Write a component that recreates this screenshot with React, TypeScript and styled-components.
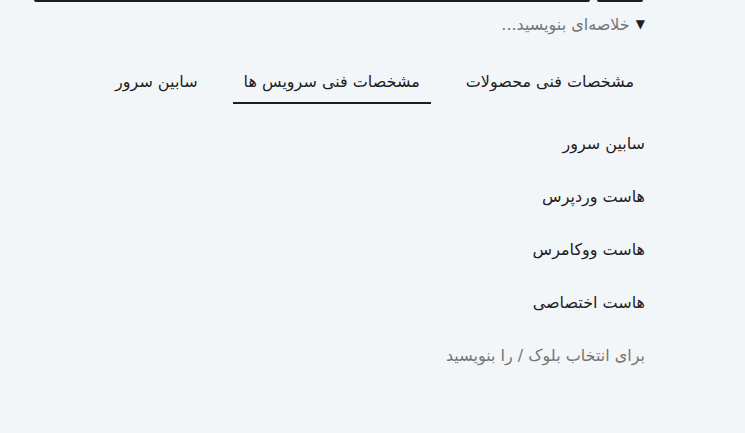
import React from "react";
import styled, { createGlobalStyle } from "styled-components";

const Global = createGlobalStyle`
  html, body { margin: 0; padding: 0; background: #f3f6f9; }
  body { font-family: "DejaVu Sans", sans-serif; color: #1e1e1e; }
`;

const Page = styled.div`
  direction: rtl;
  width: 611px;
  margin-left: 34px;
  box-sizing: border-box;
`;

const TopRow = styled.div`
  display: flex;
  gap: 7px;
  height: 2px;
  padding-right: 2px;
`;

const TopBox = styled.div<{ $w: number }>`
  width: ${(p) => p.$w}px;
  height: 2px;
  background: #1e1e1e;
  border-radius: 0 0 2px 2px;
`;

const Summary = styled.div`
  display: flex;
  align-items: center;
  gap: 6px;
  margin-top: 12px;
  height: 20px;
  font-size: 16px;
  color: #757575;
`;

const Arrow = styled.span`
  color: #1e1e1e;
  font-size: 12px;
`;

const Tabs = styled.div`
  display: flex;
  gap: 24px;
  margin-top: 26px;
`;

const Tab = styled.div<{ $active?: boolean }>`
  padding: 0 11px;
  height: 44px;
  display: flex;
  align-items: center;
  font-size: 16px;
  box-sizing: border-box;
  border-bottom: 2px solid ${(p) => (p.$active ? "#1e1e1e" : "transparent")};
`;

const List = styled.div`
  display: flex;
  flex-direction: column;
  margin-top: 13px;
`;

const Item = styled.div<{ $muted?: boolean }>`
  height: 53px;
  display: flex;
  align-items: center;
  font-size: 16px;
  color: ${(p) => (p.$muted ? "#757575" : "#1e1e1e")};
`;

export default function App() {
  return (
    <>
      <Global />
      <Page>
        <TopRow>
          <TopBox $w={46} />
          <TopBox $w={556} />
        </TopRow>
        <Summary>
          <Arrow>▼</Arrow>
          <span>خلاصه‌ای بنویسید...</span>
        </Summary>
        <Tabs>
          <Tab>مشخصات فنی محصولات</Tab>
          <Tab $active>مشخصات فنی سرویس ها</Tab>
          <Tab>سابین سرور</Tab>
        </Tabs>
        <List>
          <Item>سابین سرور</Item>
          <Item>هاست وردپرس</Item>
          <Item>هاست ووکامرس</Item>
          <Item>هاست اختصاصی</Item>
          <Item $muted>برای انتخاب بلوک / را بنویسید</Item>
        </List>
      </Page>
    </>
  );
}
